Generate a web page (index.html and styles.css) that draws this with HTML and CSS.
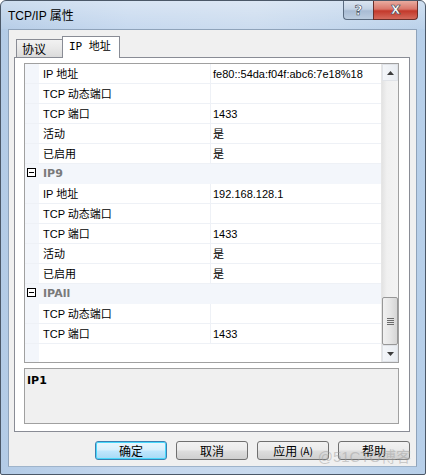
FILE: index.html
```html
<!DOCTYPE html>
<html>
<head>
<meta charset="utf-8">
<link rel="stylesheet" href="styles.css">
</head>
<body>
<div class="window">
  <div class="titlebar">
    <span class="title">TCP/IP 属性</span>
    <div class="caption">
      <div class="cbtn help"><span>?</span></div>
      <div class="cbtn close"><span>x</span></div>
    </div>
  </div>
  <div class="client">
    <div class="tabs">
      <div class="tab">协议</div>
      <div class="tab active">IP 地址</div>
    </div>
    <div class="panel">
      <div class="grid">
        <div class="rows">
          <div class="row"><div class="gut"></div><div class="lbl">IP 地址</div><div class="val">fe80::54da:f04f:abc6:7e18%18</div></div>
          <div class="row"><div class="gut"></div><div class="lbl">TCP 动态端口</div><div class="val"></div></div>
          <div class="row"><div class="gut"></div><div class="lbl">TCP 端口</div><div class="val">1433</div></div>
          <div class="row"><div class="gut"></div><div class="lbl">活动</div><div class="val">是</div></div>
          <div class="row"><div class="gut"></div><div class="lbl">已启用</div><div class="val">是</div></div>
          <div class="row cat"><div class="gut"><span class="minus"></span></div><div class="cname">IP9</div></div>
          <div class="row"><div class="gut"></div><div class="lbl">IP 地址</div><div class="val">192.168.128.1</div></div>
          <div class="row"><div class="gut"></div><div class="lbl">TCP 动态端口</div><div class="val"></div></div>
          <div class="row"><div class="gut"></div><div class="lbl">TCP 端口</div><div class="val">1433</div></div>
          <div class="row"><div class="gut"></div><div class="lbl">活动</div><div class="val">是</div></div>
          <div class="row"><div class="gut"></div><div class="lbl">已启用</div><div class="val">是</div></div>
          <div class="row cat"><div class="gut"><span class="minus"></span></div><div class="cname">IPAll</div></div>
          <div class="row"><div class="gut"></div><div class="lbl">TCP 动态端口</div><div class="val"></div></div>
          <div class="row"><div class="gut"></div><div class="lbl">TCP 端口</div><div class="val">1433</div></div>
          <div class="filler"><div class="gut"></div></div>
        </div>
        <div class="scrollbar">
          <div class="sbtn"><svg width="7" height="4" viewBox="0 0 7 4"><path d="M0 4 L3.5 0 L7 4 Z" fill="#3c3c3c"/></svg></div>
          <div class="track">
            <div class="thumb"><span class="grip"></span><span class="grip"></span><span class="grip"></span><span class="grip"></span></div>
          </div>
          <div class="sbtn"><svg width="7" height="4" viewBox="0 0 7 4"><path d="M0 0 L3.5 4 L7 0 Z" fill="#3c3c3c"/></svg></div>
        </div>
      </div>
      <div class="desc"><span class="dtitle">IP1</span></div>
    </div>
    <div class="buttons">
      <div class="btn default">确定</div>
      <div class="btn">取消</div>
      <div class="btn">应用 <span class="acc">(A)</span></div>
      <div class="btn">帮助</div>
    </div>
  </div>
  <div class="watermark">@51CTO博客</div>
</div>
</body>
</html>
```

FILE: styles.css
```css
* { box-sizing: border-box; }
html, body { margin: 0; padding: 0; }
body {
  width: 426px;
  height: 475px;
  overflow: hidden;
  font-family: "Liberation Sans", "Noto Sans CJK SC", sans-serif;
  font-size: 12px;
  color: #000;
  background: #fff;
}
.window {
  position: relative;
  width: 426px;
  height: 475px;
  border: 1px solid #4b5868;
  border-radius: 6px 6px 2px 2px;
  background: linear-gradient(90deg, #b3cbe6 0%, #c4d7ee 30%, #c9daee 60%, #b7cfe9 100%);
  display: flex;
  flex-direction: column;
  overflow: hidden;
}
.titlebar {
  height: 28px;
  display: flex;
  align-items: flex-start;
  justify-content: space-between;
  padding-left: 7px;
  padding-right: 7px;
  background: linear-gradient(180deg, rgba(255,255,255,0.35) 0%, rgba(255,255,255,0.05) 100%);
}
.title {
  margin-top: 8px;
  font-size: 12px;
  line-height: 14px;
  color: #000;
}
.caption {
  display: flex;
}
.cbtn {
  height: 19px;
  border: 1px solid #5a6b80;
  border-top: none;
  display: flex;
  align-items: center;
  justify-content: center;
  font-family: "DejaVu Sans", sans-serif;
  font-weight: bold;
  color: #fff;
  -webkit-text-stroke: 0.6px #3a4658;
}
.help {
  width: 30px;
  border-radius: 0 0 0 4px;
  background: linear-gradient(180deg, #dbe5f1 0%, #c3d2e4 45%, #a9bcd4 55%, #bccde0 100%);
  font-size: 14px;
  border-right: none;
}
.close {
  width: 45px;
  border-radius: 0 0 4px 0;
  background: linear-gradient(180deg, #e9aca0 0%, #d9766a 45%, #c3392b 55%, #d46a5c 100%);
  font-size: 15px;
  border-color: #6a2f2a;
}
.close span { margin-top: -3px; }
.client {
  margin: 0 8px 0 7px;
  height: 438px;
  background: #f0f0f0;
  border: 1px solid #8fa3ba;
  border-bottom-color: #9fb4cb;
  display: flex;
  flex-direction: column;
  padding: 6px 6px 0 5px;
}
.tabs {
  display: flex;
  align-items: flex-end;
  height: 21px;
  padding-left: 2px;
  position: relative;
  z-index: 2;
}
.tab {
  height: 18px;
  width: 46px;
  border: 1px solid #898c95;
  border-bottom: none;
  border-right: none;
  background: linear-gradient(180deg, #f2f2f2 0%, #e8e8e8 50%, #dadada 100%);
  padding-left: 5px;
  line-height: 17px;
  font-family: "Noto Sans CJK SC", sans-serif;
  font-size: 12px;
}
.tab.active {
  height: 22px;
  margin-bottom: -1px;
  width: 58px;
  border-right: 1px solid #898c95;
  background: #fff;
  padding-left: 6px;
  line-height: 19px;
  font-family: "DejaVu Sans Mono", "Noto Sans CJK SC", monospace;
  font-size: 11px;
}
.panel {
  width: 396px;
  height: 375px;
  border: 1px solid #898c95;
  background: #fff;
  padding: 5px 0 0 9px;
  display: flex;
  flex-direction: column;
}
.grid {
  width: 375px;
  height: 300px;
  border: 1px solid #a0a0a0;
  display: flex;
  background: #fff;
}
.rows {
  width: 356px;
  display: flex;
  flex-direction: column;
  font-size: 11px;
}
.row {
  height: 20px;
  display: flex;
  border-bottom: 1px solid #eef1f6;
}
.gut {
  width: 14px;
  flex: none;
  background: #f3f6fb;
  display: flex;
  align-items: center;
}
.lbl {
  width: 172px;
  padding-left: 4px;
  border-right: 1px solid #eef1f6;
  line-height: 20px;
  white-space: nowrap;
}
.val {
  flex: 1;
  padding-left: 2px;
  line-height: 20px;
  white-space: nowrap;
}
.row.cat {
  background: #f3f6fb;
  border-bottom-color: #f3f6fb;
}
.cname {
  padding-left: 4px;
  font-weight: bold;
  color: #7a7a7a;
  line-height: 20px;
  font-family: "DejaVu Sans", sans-serif;
  font-size: 11px;
}
.minus {
  display: block;
  width: 9px;
  height: 9px;
  margin-left: 2px;
  margin-top: -2px;
  border: 1px solid #000;
  background: #fff;
  position: relative;
}
.minus::after {
  content: "";
  position: absolute;
  left: 1px;
  top: 3px;
  width: 5px;
  height: 1px;
  background: #000;
}
.filler {
  flex: 1;
  display: flex;
}
.scrollbar {
  width: 17px;
  display: flex;
  flex-direction: column;
  background: linear-gradient(90deg, #e3e3e3 0%, #f0f0f0 30%, #f3f3f3 100%);
  border-left: 1px solid #e6e6e6;
}
.sbtn {
  height: 17px;
  display: flex;
  align-items: center;
  justify-content: center;
  border: 1px solid #e0e3e8;
  background: linear-gradient(90deg, #f4f6f9 0%, #e9edf2 100%);
}
.track {
  flex: 1;
  display: flex;
  flex-direction: column;
  justify-content: flex-end;
}
.thumb {
  height: 48px;
  border: 1px solid #979797;
  border-radius: 2px;
  background: linear-gradient(90deg, #f1f1f1 0%, #e6e6e6 50%, #d6d6d6 100%);
  display: flex;
  flex-direction: column;
  align-items: center;
  justify-content: center;
  gap: 1px;
}
.grip {
  display: block;
  width: 7px;
  height: 1px;
  background: #6b6b6b;
}
.desc {
  margin-top: 5px;
  width: 375px;
  height: 56px;
  border: 1px solid #a0a0a0;
  background: #f0f0f0;
  padding: 4px 0 0 2px;
}
.dtitle {
  font-weight: bold;
  font-family: "DejaVu Sans", sans-serif;
  font-size: 11px;
}
.buttons {
  display: flex;
  justify-content: flex-end;
  gap: 9px;
  margin-top: 9px;
}
.btn {
  width: 72px;
  height: 19px;
  border: 1px solid #707070;
  border-radius: 3px;
  background: linear-gradient(180deg, #f2f2f2 0%, #ebebeb 45%, #dddddd 55%, #cfcfcf 100%);
  display: flex;
  align-items: center;
  justify-content: center;
  font-family: "Noto Sans CJK SC", sans-serif;
  font-size: 12px;
  line-height: 1;
  white-space: pre;
}
.acc { font-size: 10px; }
.btn.default {
  border-color: #3c7fb1;
  box-shadow: inset 0 0 0 1px #48d8fb;
  background: linear-gradient(180deg, #eaf6fd 0%, #d9f0fc 45%, #bee6fd 55%, #a7d9f5 100%);
}
.watermark {
  position: absolute;
  right: 14px;
  bottom: 8px;
  font-family: "Liberation Sans", "Noto Sans CJK SC", sans-serif;
  font-size: 15px;
  color: rgba(160,160,160,0.5);
}
```
